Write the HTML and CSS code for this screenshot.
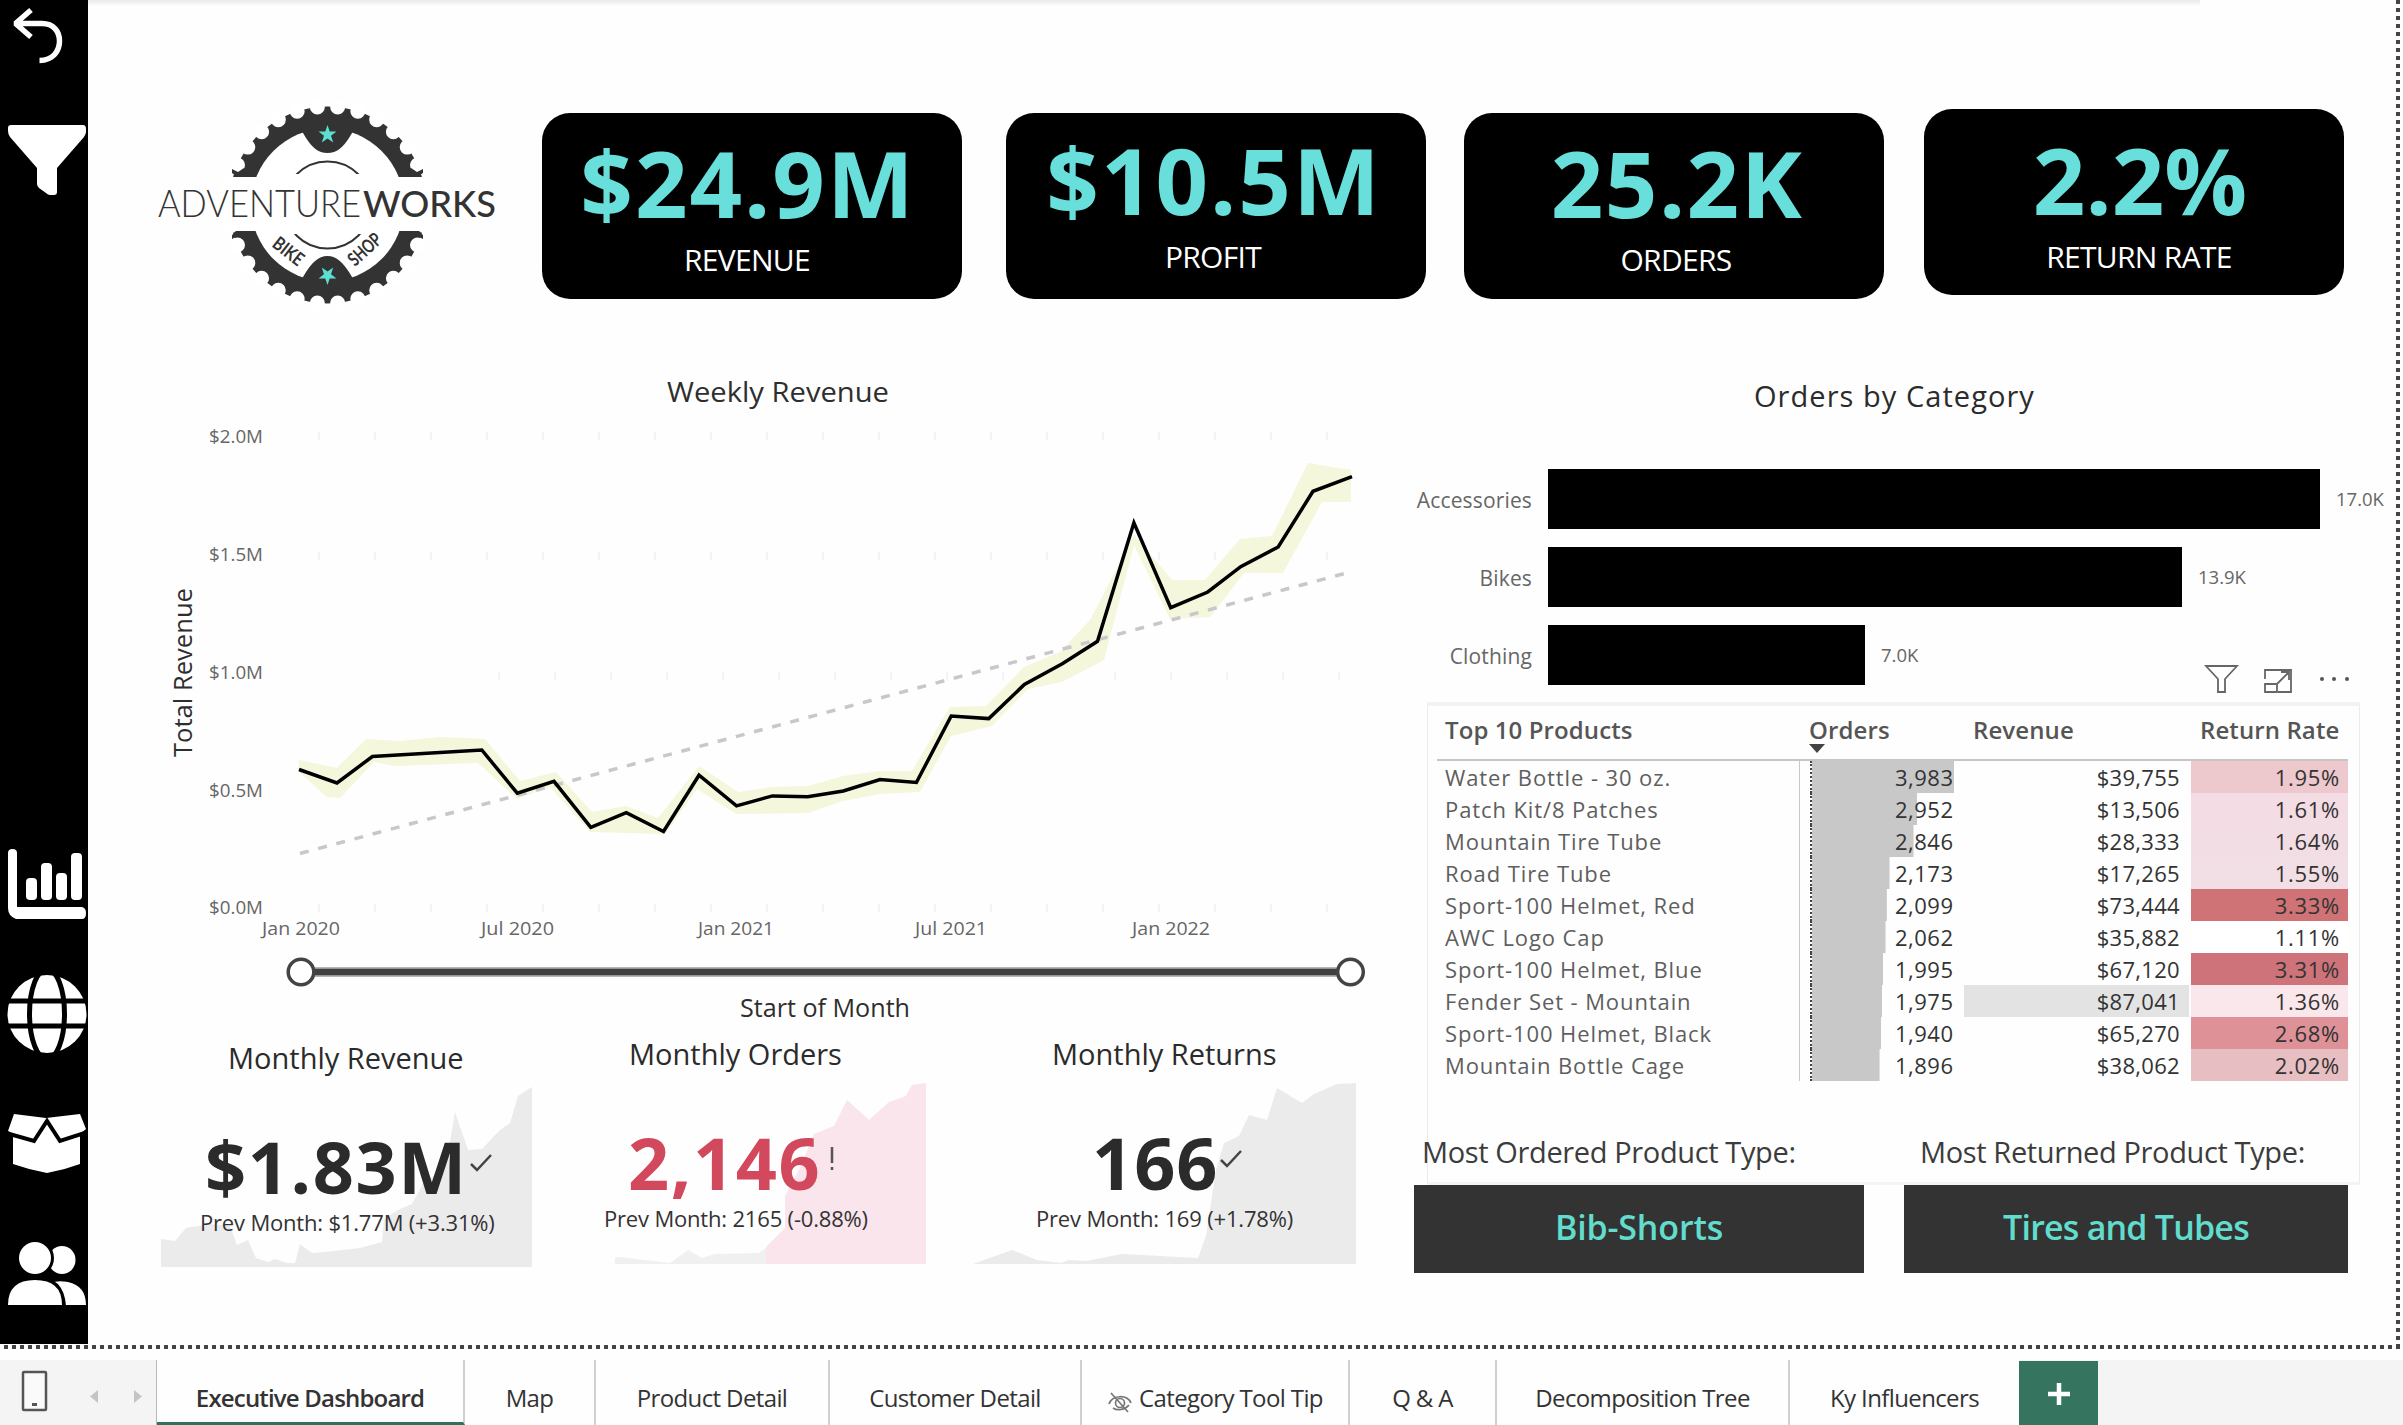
FILE: index.html
```html
<!DOCTYPE html>
<html lang="en">
<head>
<meta charset="utf-8">
<title>AdventureWorks Executive Dashboard</title>
<link rel="stylesheet" href="styles.css">
</head>
<body>
<div class="workspace">
  <nav class="sidebar">
    <svg width="88" height="1344" viewBox="0 0 88 1344" fill="#fff">
      <path d="M31 10 15.500 23.500 31 37M16 23.500H42C54 23.500 59.500 32 59.500 41C59.500 51 53 60.500 39.500 60.500" fill="none" stroke="#fff" stroke-width="5.500" stroke-linejoin="bevel"/>
      <path d="M11 125H83Q86 125 86 129V132Q86 134 84 137L57 168V192Q57 195 54 195H50Q48 195 46 193L39 188Q37 186 37 184V168L10 137Q8 134 8 131V128Q8 125 11 125Z"/>
      <path d="M8 853Q8 849 12.500 849Q17 849 17 853V907H82Q86 908 86 913Q86 919 82 919H16Q8 916 8 908Z"/>
      <rect x="26" y="878" width="11" height="22" rx="4"/><rect x="41" y="863" width="11" height="37" rx="4"/><rect x="56" y="873" width="11" height="27" rx="4"/><rect x="71" y="853" width="11" height="47" rx="4"/>
      <ellipse cx="47" cy="1014" rx="39.500" ry="39"/>
      <g fill="none" stroke="#000" stroke-width="5"><ellipse cx="47" cy="1014" rx="17.500" ry="45"/><path d="M4 1001H88M4 1026H88"/></g>
      <path d="M14 1114 46 1118 80 1114 86 1129 80 1134V1164Q64 1170 47 1173Q30 1170 13 1164V1134L8 1131Z"/>
      <path d="M6 1133 34 1141 47 1121 60 1141 88 1132" fill="none" stroke="#000" stroke-width="4"/>
      <ellipse cx="62" cy="1260" rx="13.500" ry="14"/><path d="M50 1305V1283Q58 1280 68 1282Q86 1286 86 1305Z"/>
      <ellipse cx="35" cy="1258" rx="19" ry="19" fill="#000"/><path d="M5 1306Q7 1276 35 1276Q64 1276 66 1306Z" fill="#000"/>
      <ellipse cx="35" cy="1258" rx="16" ry="16"/><path d="M8 1305Q8 1280 35 1280Q62 1280 62 1305Z"/>
    </svg>
  </nav>
  <main class="report">
    <header class="kpis">
      <svg class="logo" width="355" height="210" viewBox="150 100 355 210">
        <circle cx="327.500" cy="205" r="98.500" fill="#333"/>
        <circle cx="327.500" cy="205" r="98.500" fill="none" stroke="#fff" stroke-width="15" stroke-linecap="round" pathLength="300" stroke-dasharray="0 10"/>
        <circle cx="327.500" cy="205" r="76.500" fill="#fff"/>
        <path d="M300 128 306 138C312 147 318 153 327.500 153S343 147 349 138L355 128ZM300 282 306 272C312 263 318 256 327.500 256S343 263 349 272L355 282Z" fill="#333"/>
        <circle cx="327.500" cy="205" r="43.500" fill="none" stroke="#333" stroke-width="2"/>
        <path fill="#fff" d="M222 177H433V231H222ZM283 174H372V234H283Z"/>
        <path fill="#333" d="M232 169 238 172 244 168 248 177H238L232 173ZM423 169 417 172 411 168 407 177H417L423 173ZM232 239 238 236 244 240 248 231H238L232 235ZM423 239 417 236 411 240 407 231H417L423 235Z"/>
        <path id="star" fill="#5be0cf" d="M327.500 125 329.700 131.500H336.500L331 135.800 333.200 142.500 327.500 138.500 321.800 142.500 324 135.800 318.500 131.500H325.300Z"/>
        <use href="#star" transform="rotate(180 327.500 205)"/>
        <text class="logo-light" x="158" y="217" textLength="203" lengthAdjust="spacingAndGlyphs">ADVENTURE</text>
        <text class="logo-bold" x="363" y="217" textLength="133" lengthAdjust="spacingAndGlyphs">WORKS</text>
        <text class="logo-sub" transform="translate(271 246) rotate(38)" textLength="34" lengthAdjust="spacingAndGlyphs">BIKE</text>
        <text class="logo-sub" transform="translate(355 267) rotate(-42)" textLength="38" lengthAdjust="spacingAndGlyphs">SHOP</text>
      </svg>
      <section class="kpi kpi-revenue"><strong>$24.9M</strong><span>REVENUE</span></section>
      <section class="kpi kpi-profit"><strong>$10.5M</strong><span>PROFIT</span></section>
      <section class="kpi kpi-orders"><strong>25.2K</strong><span>ORDERS</span></section>
      <section class="kpi kpi-returns"><strong>2.2%</strong><span>RETURN RATE</span></section>
    </header>
    <div class="columns">
      <div class="left">
        <svg class="trend" width="1250" height="670" viewBox="150 360 1250 670">
          <g class="chart-title"><text x="667" y="402" textLength="222" lengthAdjust="spacingAndGlyphs">Weekly Revenue</text></g>
          <g stroke="#f3f3f3" stroke-width="9" stroke-dasharray="2 54"><path d="M318 436H1350M318 556H1350M498 676H1350M318 908H1350"/></g>
          <g class="axis">
            <text x="209" y="443" textLength="54" lengthAdjust="spacingAndGlyphs">$2.0M</text>
            <text x="209" y="561" textLength="54" lengthAdjust="spacingAndGlyphs">$1.5M</text>
            <text x="209" y="679" textLength="54" lengthAdjust="spacingAndGlyphs">$1.0M</text>
            <text x="209" y="797" textLength="54" lengthAdjust="spacingAndGlyphs">$0.5M</text>
            <text x="209" y="914" textLength="54" lengthAdjust="spacingAndGlyphs">$0.0M</text>
            <text x="262" y="935" textLength="78" lengthAdjust="spacingAndGlyphs">Jan 2020</text>
            <text x="481" y="935" textLength="73" lengthAdjust="spacingAndGlyphs">Jul 2020</text>
            <text x="698" y="935" textLength="76" lengthAdjust="spacingAndGlyphs">Jan 2021</text>
            <text x="915" y="935" textLength="72" lengthAdjust="spacingAndGlyphs">Jul 2021</text>
            <text x="1132" y="935" textLength="78" lengthAdjust="spacingAndGlyphs">Jan 2022</text>
          </g>
          <text class="axis-title" transform="translate(192 757) rotate(-90)" textLength="169" lengthAdjust="spacingAndGlyphs">Total Revenue</text>
          <path class="band" d="M299 760 337 768 366 739 400 741 440 737 485 739 520 781 556 772 592 812 626 806 658 818 699 766 738 792 772 787 808 786 843 776 880 771 912 771 950 707 986 706 1024 667 1060 652 1090 620 1134 535 1172 580 1205 580 1240 539 1272 536 1308 463 1351 470V502L1322 502 1283 573 1244 573 1210 617 1170 619 1134 545 1104 660 1062 682 1028 689 992 726 951 736 920 792 880 794 843 801 808 813 736 814 697 789 665 834 590 832 550 787 517 799 478 763 395 766 374 762 340 798 327 797 299 772Z"/>
          <path d="M300 853.500 1352 571.500" stroke="#c9c7c9" stroke-width="3.500" stroke-dasharray="9 9.800" fill="none"/>
          <polyline fill="none" stroke="#000" stroke-width="3.500" points="299,769.500 337,783 372.400,756.500 481.800,750 517.300,793.200 554,781.400 590.800,827.300 626.300,812.700 663.500,831.500 699,775.200 736.500,805.900 772.400,795.900 807.700,796.700 843.300,791 880,779.500 916.400,782.500 951.200,716 988.800,718.600 1024.400,684.500 1062.700,663.500 1097.500,641.300 1133.900,522.700 1170.700,607.600 1207.800,592 1240.700,566.700 1278.200,547 1313,491.300 1352,476.700"/>
          <path d="M301 972H1351" stroke="#b5b5b5" stroke-width="10"/><path d="M301 972H1351" stroke="#404040" stroke-width="6.500"/>
          <g fill="#fff" stroke="#444" stroke-width="3.500"><circle cx="301" cy="972" r="12.800"/><circle cx="1350.500" cy="972" r="12.800"/></g>
          <text class="axis-title" x="740" y="1017" textLength="170" lengthAdjust="spacingAndGlyphs">Start of Month</text>
        </svg>
        <div class="minis">
          <section class="mini mini-revenue">
            <svg class="area" width="373" height="184" viewBox="160 1084 373 184"><path fill="#ebebeb" d="M161 1267V1239L175 1241 186 1228 210 1224 230 1226 237 1245 248 1240 256 1258 268 1262 275 1259 287 1263 295 1263 300 1244 312 1253 325 1252 360 1248 382 1242 384 1219 400 1209 412 1204 424 1182 440 1172 447 1160 455 1112 468 1150 482 1149 500 1130 510 1123 518 1096 532 1087V1267Z"/></svg>
            <h2>Monthly Revenue</h2>
            <p class="value"><strong>$1.83M</strong><svg width="24" height="18" viewBox="0 0 24 18"><path d="M2 10 8 16 22 1" fill="none" stroke="#444" stroke-width="2.500"/></svg></p>
            <p class="prev">Prev Month: $1.77M (+3.31%)</p>
          </section>
          <section class="mini mini-orders">
            <svg class="area" width="313" height="184" viewBox="616 1080 313 184"><path fill="#f1f0f1" d="M615 1258 622 1257 646 1260 671 1263 689 1250 703 1258 716 1254 760 1253 768 1247V1264H615Z"/><path fill="#f9e5eb" d="M767 1264V1247L786 1228V1196L800 1170 815 1134 835 1126 848 1100 870 1120 890 1102 907 1096 913 1085 927 1083V1264Z"/></svg>
            <h2>Monthly Orders</h2>
            <p class="value"><strong>2,146</strong><svg width="6" height="26" viewBox="0 0 6 26"><path d="M3 1V17M3 21V24" stroke="#555" stroke-width="2.500"/></svg></p>
            <p class="prev">Prev Month: 2165 (-0.88%)</p>
          </section>
          <section class="mini mini-returns">
            <svg class="area" width="385" height="184" viewBox="973 1080 385 184"><path fill="#ebebeb" d="M974 1264 1013 1250 1038 1260 1062 1263 1070 1260 1087 1261 1123 1254 1199 1258 1207 1236 1217 1170 1225 1143 1240 1136 1250 1115 1268 1120 1278 1088 1303 1103 1315 1094 1338 1084 1357 1083V1264Z"/></svg>
            <h2>Monthly Returns</h2>
            <p class="value"><strong>166</strong><svg width="24" height="18" viewBox="0 0 24 18"><path d="M2 10 8 16 22 1" fill="none" stroke="#444" stroke-width="2.500"/></svg></p>
            <p class="prev">Prev Month: 169 (+1.78%)</p>
          </section>
        </div>
      </div>
      <div class="right">
        <h2 class="category-title">Orders by Category</h2>
        <div class="bars">
          <div class="row"><span class="cat">Accessories</span><i style="width:772px"></i><span class="num">17.0K</span></div>
          <div class="row"><span class="cat">Bikes</span><i style="width:634px"></i><span class="num">13.9K</span></div>
          <div class="row"><span class="cat">Clothing</span><i style="width:317px"></i><span class="num">7.0K</span></div>
        </div>
        <div class="panel">
          <svg class="tools" width="150" height="32" viewBox="2205 663 150 32" fill="none" stroke="#666" stroke-width="1.800"><path d="M2209 666H2240L2228 679V692H2221V679Z"/><path d="M2268 679V670H2294V692H2281M2268 684H2280V692H2268ZM2280 684 2292 672M2284 672H2292V680"/><g fill="#555" stroke="none"><circle cx="2325" cy="679" r="2"/><circle cx="2337" cy="679" r="2"/><circle cx="2350" cy="679" r="2"/></g></svg>
          <table>
            <thead><tr><th class="c1">Top 10 Products</th><th class="c2">Orders<b class="sort"></b></th><th class="c3">Revenue</th><th class="c4">Return Rate</th></tr></thead>
            <tbody>
              <tr><td>Water Bottle - 30 oz.</td><td><div class="bar" style="background-size:100% 100%">3,983</div></td><td>$39,755</td><td><div class="heat" style="background:#edc8cd">1.95%</div></td></tr>
              <tr><td>Patch Kit/8 Patches</td><td><div class="bar" style="background-size:74.100% 100%">2,952</div></td><td>$13,506</td><td><div class="heat" style="background:#f4dce4">1.61%</div></td></tr>
              <tr><td>Mountain Tire Tube</td><td><div class="bar" style="background-size:71.500% 100%">2,846</div></td><td>$28,333</td><td><div class="heat" style="background:#f2dde4">1.64%</div></td></tr>
              <tr><td>Road Tire Tube</td><td><div class="bar" style="background-size:54.600% 100%">2,173</div></td><td>$17,265</td><td><div class="heat" style="background:#f2dfe6">1.55%</div></td></tr>
              <tr><td>Sport-100 Helmet, Red</td><td><div class="bar" style="background-size:52.700% 100%">2,099</div></td><td>$73,444</td><td><div class="heat" style="background:#cf7376">3.33%</div></td></tr>
              <tr><td>AWC Logo Cap</td><td><div class="bar" style="background-size:51.800% 100%">2,062</div></td><td>$35,882</td><td><div class="heat" style="background:#fff">1.11%</div></td></tr>
              <tr><td>Sport-100 Helmet, Blue</td><td><div class="bar" style="background-size:50.100% 100%">1,995</div></td><td>$67,120</td><td><div class="heat" style="background:#cf737b">3.31%</div></td></tr>
              <tr><td>Fender Set - Mountain</td><td><div class="bar" style="background-size:49.600% 100%">1,975</div></td><td class="top">$87,041</td><td><div class="heat" style="background:#fae7ec">1.36%</div></td></tr>
              <tr><td>Sport-100 Helmet, Black</td><td><div class="bar" style="background-size:48.700% 100%">1,940</div></td><td>$65,270</td><td><div class="heat" style="background:#de9298">2.68%</div></td></tr>
              <tr><td>Mountain Bottle Cage</td><td><div class="bar" style="background-size:47.600% 100%">1,896</div></td><td>$38,062</td><td><div class="heat" style="background:#e7bec2">2.02%</div></td></tr>
            </tbody>
          </table>
          <div class="captions"><span class="cap1">Most Ordered Product Type:</span><span class="cap2">Most Returned Product Type:</span></div>
        </div>
        <div class="answers"><strong class="ans1">Bib-Shorts</strong><strong class="ans2">Tires and Tubes</strong></div>
      </div>
    </div>
  </main>
  <div class="edge"></div>
</div>
<div class="divider"></div>
<footer class="tabs">
  <div class="pager"><svg width="156" height="65" viewBox="0 0 156 65"><rect x="23" y="12" width="23" height="38" rx="1" fill="#fafafa" stroke="#555" stroke-width="2.500"/><path d="M32 44.500H37" stroke="#555" stroke-width="3"/><path d="M98 30V43L90 36.500ZM134 30V43L142 36.500Z" fill="#c4c4c4"/></svg></div>
  <span class="tab active t1">Executive Dashboard</span>
  <span class="tab t2">Map</span>
  <span class="tab t3">Product Detail</span>
  <span class="tab t4">Customer Detail</span>
  <span class="tab t5"><svg width="26" height="24" viewBox="0 0 26 24" fill="none" stroke="#777" stroke-width="1.700"><path d="M2 14C5 5 20 4 24 13M6 18C10 21 18 20 22 15M4 3 21 22"/><circle cx="13" cy="13" r="4.500"/></svg>Category Tool Tip</span>
  <span class="tab t6">Q &amp; A</span>
  <span class="tab t7">Decomposition Tree</span>
  <span class="tab t8">Ky Influencers</span>
  <span class="add"><svg width="24" height="24" viewBox="0 0 24 24"><path d="M12 1V23M1 12H23" stroke="#fff" stroke-width="4.500"/></svg></span>
</footer>
</body>
</html>
```
FILE: styles.css
```css
* { box-sizing: border-box; }
body { margin: 0; width: 2403px; height: 1425px; overflow: hidden; background: #fefefe; color: #333; font-family: "Open Sans", "Noto Sans", sans-serif; white-space: nowrap; }
h2, p { margin: 0; font-weight: 400; }
svg { display: block; flex: none; }
.workspace { display: flex; height: 1344px; }
.sidebar { width: 88px; background: #000; }
.report { width: 2308px; background: linear-gradient(#e9e9e9, #fefefe) no-repeat 0 0 / 2112px 6px; }
.edge { width: 4px; height: 1348px; background: repeating-linear-gradient(#444 0 4px, transparent 4px 8px); }
.divider { height: 4px; margin: 1px 0 11px; background: repeating-linear-gradient(90deg, transparent 0 4px, #444 4px 8px); }

.kpis { display: flex; align-items: flex-start; height: 360px; padding: 100px 0 0 62px; }
.kpi { width: 420px; height: 186px; margin-top: 13px; padding-top: 20px; border-radius: 28px; background: #000; color: #fff; display: flex; flex-direction: column; align-items: center; }
.kpi strong { font-size: 92px; line-height: 100px; letter-spacing: 2px; margin-right: -2px; color: #68dfda; }
.kpi span { font-size: 30px; line-height: 40px; margin-top: 7px; letter-spacing: -.7px; }
.kpi-revenue { margin-left: 37px; padding-right: 10px; }
.kpi-profit { margin-left: 44px; padding-top: 17px; padding-right: 6px; }
.kpi-orders { margin-left: 38px; padding-left: 4px; }
.kpi-orders strong { letter-spacing: 1.5px; }
.kpi-returns { margin-left: 40px; margin-top: 9px; padding-top: 21px; padding-left: 10px; }
.kpi-returns strong { letter-spacing: 0; }
.logo text { fill: #333; font-family: Lato, sans-serif; }
.logo .logo-light { font-size: 37px; font-weight: 300; }
.logo .logo-bold { font-size: 37px; font-weight: 500; }
.logo .logo-sub { font-size: 19px; font-weight: 700; }

.columns { display: flex; padding-left: 62px; }
.left { width: 1264px; }
.right { width: 982px; }
.trend text { fill: #2e2e2e; }
.trend .chart-title text { font-size: 28px; font-weight: 500; }
.trend .axis text { font-size: 18.500px; fill: #666; }
.axis-title { font-size: 25px; }
.band { fill: #f4f7dc; }

.minis { display: flex; padding-left: 10px; }
.mini { position: relative; height: 240px; display: flex; flex-direction: column; }
.mini-revenue { width: 455px; padding-top: 7px; }
.mini-orders { width: 357px; padding-top: 3px; }
.mini-returns { width: 385px; padding-top: 3px; }
.area { position: absolute; left: 0; top: 54px; }
.mini-orders .area, .mini-returns .area { top: 50px; }
.mini h2, .mini p { position: relative; }
.mini h2 { font-size: 29px; line-height: 42px; font-weight: 500; color: #2b2b2b; }
.value { display: flex; height: 100px; margin-top: 37px; }
.value strong { font-size: 72px; line-height: 100px; letter-spacing: 1.600px; color: #2b2b2b; }
.value svg { margin: 38px 0 0 1px; }
.prev { font-size: 22px; line-height: 32px; margin-top: -10px; letter-spacing: -.180px; color: #333; }
.mini-revenue h2 { margin-left: 68px; }
.mini-revenue .value { margin-left: 45px; }
.mini-revenue .prev { margin-left: 40px; }
.mini-orders h2 { margin-left: 14px; }
.mini-orders .value { margin-left: 13px; }
.mini-orders .value strong { color: #d2485d; }
.mini-orders .value svg { margin: 34px 0 0 8px; }
.mini-orders .prev { margin-left: -11px; }
.mini-returns h2 { margin-left: 80px; }
.mini-returns .value { margin-left: 120px; }
.mini-returns .value strong { letter-spacing: 1px; }
.mini-returns .value svg { margin-left: 0; }
.mini-returns .prev { margin-left: 64px; }

.category-title { font-size: 29px; line-height: 40px; font-weight: 500; letter-spacing: 1.050px; margin: 16px 0 53px 340px; color: #2b2b2b; }
.bars { display: flex; flex-direction: column; gap: 18px; }
.row { display: flex; gap: 16px; height: 60px; }
.cat { width: 118px; text-align: right; font-size: 21px; line-height: 62px; letter-spacing: .150px; color: #666; }
.row i { background: #000; }
.num { font-size: 18.500px; line-height: 60px; color: #666; }
.panel { position: relative; width: 933px; height: 483px; margin: 17px 0 0 13px; padding-left: 9px; border: 1px solid #ececec; border-top: 4px solid #f2f2f2; border-bottom: 3px solid #f4f4f4; }
.tools { position: absolute; right: 7px; top: -43px; }
table { width: 911px; table-layout: fixed; border-collapse: collapse; font-size: 22px; }
thead tr { height: 54px; border-bottom: 2px solid #c6c6c6; }
th { position: relative; padding: 9px 0 0; vertical-align: top; text-align: left; font-size: 24px; line-height: 30px; font-weight: 600; letter-spacing: .100px; color: #555; }
.c1 { width: 362px; padding-left: 8px; }
.c2 { width: 165px; padding-left: 10px; }
.c3 { width: 225px; padding-left: 9px; }
.c4 { width: 159px; padding-left: 11px; }
.sort { position: absolute; left: 10px; top: 38px; border: 8px solid transparent; border-top: 9px solid #444; border-bottom: 0; }
td { height: 32px; padding: 0; line-height: 32px; text-align: right; color: #333; }
td:nth-child(1) { padding-left: 8px; text-align: left; letter-spacing: .900px; color: #5e5e5e; border-right: 1px solid #c8c8c8; }
td:nth-child(2) { padding-left: 10px; }
td:nth-child(3) { padding-right: 9px; letter-spacing: .300px; }
.bar { width: 144px; height: 32px; letter-spacing: .500px; border-left: 2px dotted #444; background: linear-gradient(#c8c8c8, #c8c8c8) no-repeat; }
.heat { height: 32px; margin-left: 2px; padding-right: 8px; letter-spacing: .700px; }
.top { background: linear-gradient(#e3e3e3, #e3e3e3) no-repeat 0 0; }
.captions { position: relative; margin: 51px 0 0 -15px; font-size: 29px; line-height: 40px; letter-spacing: -.370px; color: #3c3c3c; display: flex; }
.cap1 { width: 498px; }
.answers { display: flex; gap: 40px; }
.answers strong { height: 88px; background: #333; color: #62dccd; font-size: 34px; line-height: 84px; font-weight: 600; text-align: center; }
.ans1 { width: 450px; letter-spacing: -.150px; }
.ans2 { width: 444px; letter-spacing: -.800px; }

.tabs { display: flex; height: 65px; background: #f4f4f4; }
.pager { width: 157px; border-right: 1px solid #b8b8b8; }
.tab { display: flex; justify-content: center; padding-top: 10px; font-size: 24px; line-height: 56px; letter-spacing: -.620px; background: #fefefe; border-right: 2px solid #d0d0d0; color: #333; }
.tab.active { font-weight: 600; letter-spacing: -.820px; border-bottom: 3px solid #33705c; }
.t1 { width: 308px; } .t2 { width: 131px; } .t3 { width: 234px; } .t4 { width: 252px; }
.t5 { width: 268px; } .t6 { width: 147px; } .t7 { width: 293px; } .t8 { width: 229px; }
.tab.t8 { border-right: 0; }
.t5 svg { margin: 20px 6px 0 0; }
.add { width: 79px; height: 64px; margin-top: 1px; background: #35745f; display: flex; justify-content: center; padding-top: 21px; }
```
